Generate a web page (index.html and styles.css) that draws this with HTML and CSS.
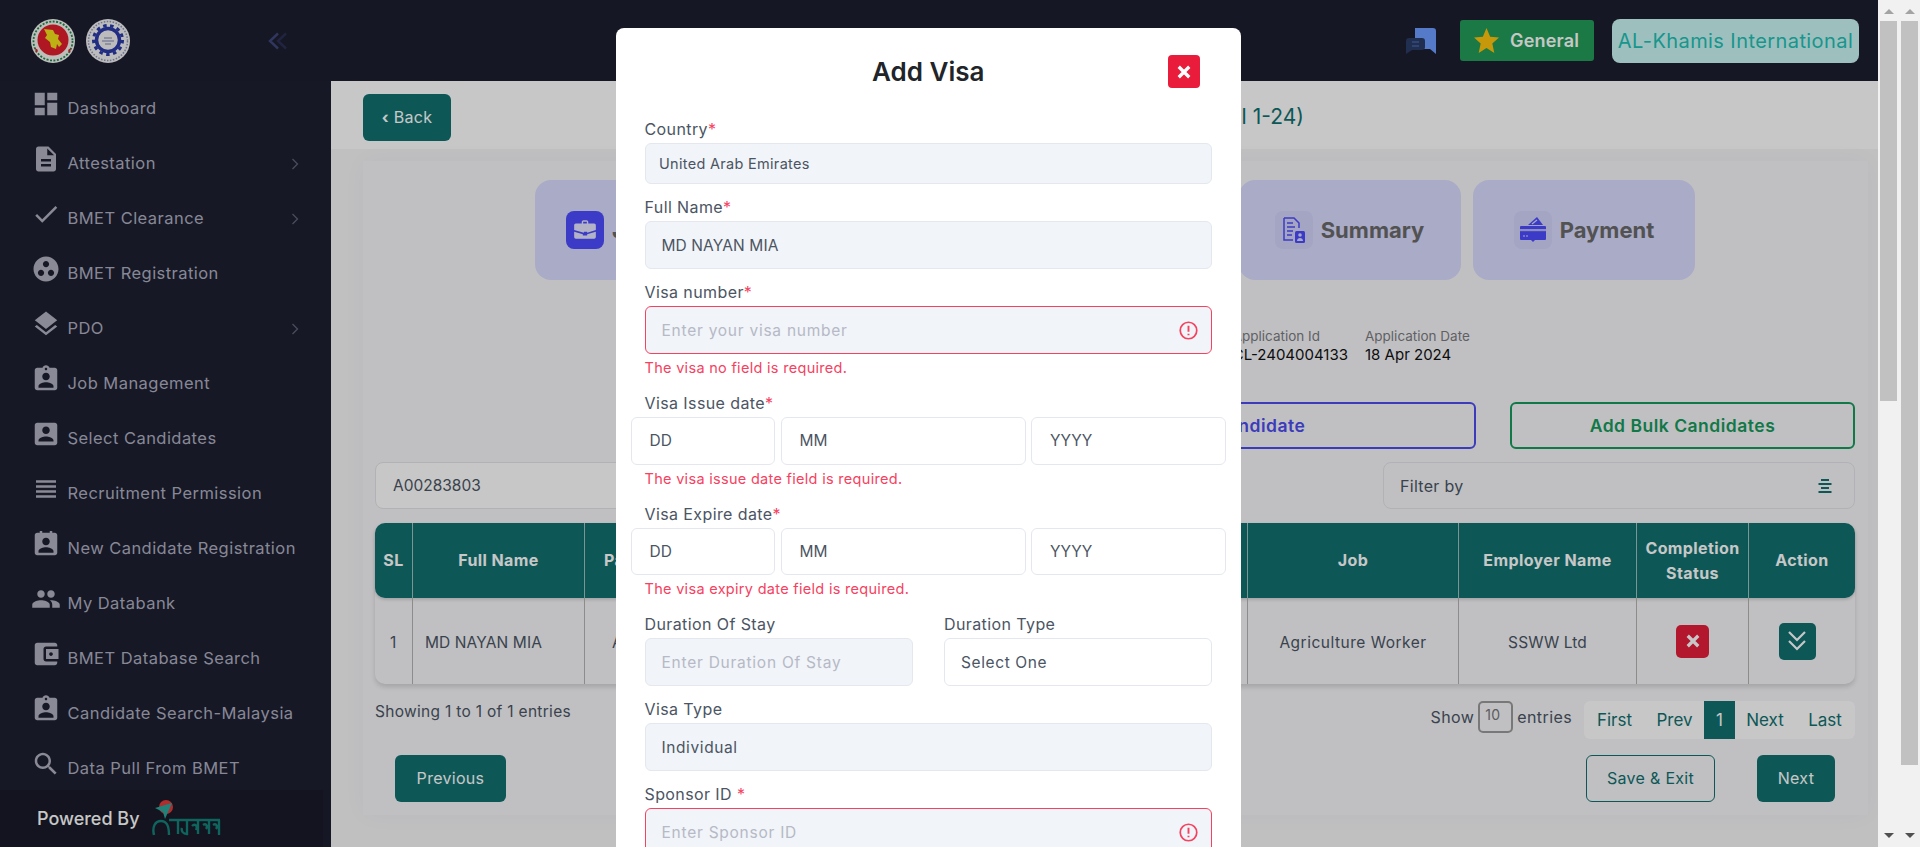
FILE: index.html
```html
<!DOCTYPE html>
<html lang="en">
<head>
<meta charset="utf-8">
<title>Add Visa</title>
<link rel="stylesheet" href="styles.css">
</head>
<body>
<svg class="sprite" aria-hidden="true">
  <symbol id="i-dashboard" viewBox="0 0 24 24"><path d="M3 13h8V3H3v10zm0 8h8v-6H3v6zm10 0h8V11h-8v10zm0-18v6h8V3h-8z"/></symbol>
  <symbol id="i-doc" viewBox="0 0 24 24"><path d="M14 2H6c-1.1 0-1.99.9-1.99 2L4 20c0 1.1.89 2 1.99 2H18c1.1 0 2-.9 2-2V8l-6-6zm2 16H8v-2h8v2zm0-4H8v-2h8v2zm-3-5V3.5L18.5 9H13z"/></symbol>
  <symbol id="i-check" viewBox="0 0 24 24"><path d="M9 16.17L4.83 12l-1.42 1.41L9 19 21 7l-1.41-1.41z"/></symbol>
  <symbol id="i-group" viewBox="0 0 24 24"><path d="M12 2C6.48 2 2 6.48 2 12s4.48 10 10 10 10-4.48 10-10S17.52 2 12 2zM8 17.5c-1.38 0-2.5-1.12-2.5-2.5s1.12-2.5 2.5-2.5 2.5 1.12 2.5 2.5-1.12 2.5-2.5 2.5zM9.500 8c0-1.38 1.12-2.5 2.5-2.5s2.5 1.12 2.5 2.5-1.12 2.5-2.5 2.5S9.500 9.380 9.500 8zm6.500 9.500c-1.38 0-2.5-1.12-2.5-2.5s1.12-2.5 2.5-2.5 2.5 1.12 2.5 2.5-1.12 2.5-2.5 2.5z"/></symbol>
  <symbol id="i-layers" viewBox="0 0 24 24"><path d="M11.99 18.54l-7.37-5.73L3 14.07l9 7 9-7-1.63-1.27-7.38 5.74zM12 16l7.36-5.73L21 9l-9-7-9 7 1.63 1.27L12 16z"/></symbol>
  <symbol id="i-assign" viewBox="0 0 24 24"><path d="M19 3h-4.18C14.4 1.84 13.3 1 12 1c-1.3 0-2.4.84-2.82 2H5c-1.1 0-2 .9-2 2v14c0 1.1.9 2 2 2h14c1.1 0 2-.9 2-2V5c0-1.1-.9-2-2-2zm-7 0c.55 0 1 .45 1 1s-.45 1-1 1-1-.45-1-1 .45-1 1-1zm0 4c1.66 0 3 1.34 3 3s-1.34 3-3 3-3-1.34-3-3 1.34-3 3-3zm6 12H6v-1.400c0-2 4-3.100 6-3.100s6 1.100 6 3.100V19z"/></symbol>
  <symbol id="i-box" viewBox="0 0 24 24"><path d="M3 5v14c0 1.100.89 2 2 2h14c1.100 0 2-.9 2-2V5c0-1.100-.9-2-2-2H5c-1.110 0-2 .9-2 2zm12 4c0 1.660-1.340 3-3 3s-3-1.340-3-3 1.340-3 3-3 3 1.340 3 3zm-9 8c0-2 4-3.100 6-3.100s6 1.100 6 3.100v1H6v-1z"/></symbol>
  <symbol id="i-lines" viewBox="0 0 24 24"><path d="M4 15h16v-2H4v2zm0 4h16v-2H4v2zm0-8h16V9H4v2zm0-6v2h16V5H4z"/></symbol>
  <symbol id="i-event" viewBox="0 0 24 24"><path d="M5 3h2V1.500h2V3h6V1.500h2V3h2c1.100 0 2 .9 2 2v14c0 1.100-.9 2-2 2H5c-1.100 0-2-.9-2-2V5c0-1.100.9-2 2-2zm7 4c-1.660 0-3 1.340-3 3s1.340 3 3 3 3-1.340 3-3-1.340-3-3-3zm6 12v-1.400c0-2-4-3.100-6-3.100s-6 1.100-6 3.100V19h12z"/></symbol>
  <symbol id="i-people" viewBox="0 0 24 24"><path d="M16 11c1.660 0 2.990-1.340 2.990-3S17.660 5 16 5c-1.660 0-3 1.340-3 3s1.340 3 3 3zm-8 0c1.660 0 2.990-1.340 2.990-3S9.660 5 8 5C6.340 5 5 6.340 5 8s1.340 3 3 3zm0 2c-2.330 0-7 1.170-7 3.500V19h14v-2.500c0-2.330-4.670-3.500-7-3.500zm8 0c-.29 0-.62.02-.97.05 1.160.84 1.970 1.970 1.970 3.450V19h6v-2.500c0-2.330-4.670-3.500-7-3.500z"/></symbol>
  <symbol id="i-wallet" viewBox="0 0 24 24"><path d="M21 18v1c0 1.100-.9 2-2 2H5c-1.110 0-2-.9-2-2V5c0-1.100.89-2 2-2h14c1.100 0 2 .9 2 2v1h-9c-1.110 0-2 .9-2 2v8c0 1.100.89 2 2 2h9zm-9-2h10V8H12v8zm4-2.500c-.83 0-1.500-.67-1.500-1.500s.67-1.500 1.500-1.500 1.500.67 1.500 1.500-.67 1.500-1.500 1.500z"/></symbol>
  <symbol id="i-search" viewBox="0 0 24 24"><path d="M15.500 14h-.79l-.28-.27C15.410 12.590 16 11.110 16 9.500 16 5.910 13.090 3 9.500 3S3 5.910 3 9.500 5.910 16 9.500 16c1.610 0 3.090-.59 4.230-1.570l.27.28v.79l5 4.990L20.490 19l-4.990-5zm-6 0C7.010 14 5 11.990 5 9.500S7.010 5 9.500 5 14 7.010 14 9.500 11.990 14 9.500 14z"/></symbol>
  <symbol id="i-chev" viewBox="0 0 8 12"><path d="M1.500 1l5 5-5 5" fill="none" stroke="currentColor" stroke-width="1.300"/></symbol>
  <symbol id="i-alert" viewBox="0 0 20 20"><circle cx="10" cy="10" r="8.700" fill="none" stroke="currentColor" stroke-width="1.800"/><path d="M10 5v6.200M10 13.300v1.800" fill="none" stroke="currentColor" stroke-width="2"/></symbol>
  <symbol id="i-x" viewBox="0 0 12 12"><path d="M1.500 1.500l9 9M10.500 1.500l-9 9" fill="none" stroke="currentColor" stroke-width="2.800"/></symbol>
</svg>

<div class="window">
  <div class="app">
    <aside class="sidebar">
      <div class="brand">
        <svg class="seal" viewBox="0 0 44 44">
          <circle cx="22" cy="22" r="22" fill="#f4f4ef"/>
          <circle cx="22" cy="22" r="19.500" fill="none" stroke="#1c8a52" stroke-width="1.800" stroke-dasharray="2 1.500"/>
          <circle cx="22" cy="21" r="15.500" fill="#e01f2e"/>
          <path d="M13 10l9 1 2 4 4 1-1 4 4 5-3 3-2-3-1 5-5-2-1-5-5-4 2-3z" fill="#f2e21c"/>
          <path d="M4 29l3 2-2 3zM40 29l-3 2 2 3z" fill="#e01f2e"/>
        </svg>
        <svg class="seal" viewBox="0 0 44 44">
          <circle cx="22" cy="22" r="22" fill="#f1f1f1"/>
          <circle cx="22" cy="22" r="19.500" fill="none" stroke="#8d93bd" stroke-width="1.500" stroke-dasharray="1.500 1.500"/>
          <circle cx="22" cy="21" r="11.500" fill="none" stroke="#2b39a8" stroke-width="3.500"/>
          <circle cx="22" cy="21" r="14.500" fill="none" stroke="#2b39a8" stroke-width="3" stroke-dasharray="3.500 3.500"/>
          <path d="M16 22h12M18 19h8M19 25h6" stroke="#7d84b4" stroke-width="1.200"/>
        </svg>
        <svg class="collapse" viewBox="0 0 20 18">
          <path d="M11 1.500L3 9l8 7.500" fill="none" stroke="#3f4679" stroke-width="2.400"/>
          <path d="M19 1.500L11 9l8 7.500" fill="none" stroke="#2b2f52" stroke-width="2.400"/>
        </svg>
      </div>
      <nav class="nav">
        <a class="nav-item"><svg class="nav-icon"><use href="#i-dashboard"/></svg><span>Dashboard</span></a>
        <a class="nav-item"><svg class="nav-icon"><use href="#i-doc"/></svg><span>Attestation</span><svg class="nav-chev"><use href="#i-chev"/></svg></a>
        <a class="nav-item"><svg class="nav-icon"><use href="#i-check"/></svg><span>BMET Clearance</span><svg class="nav-chev"><use href="#i-chev"/></svg></a>
        <a class="nav-item"><svg class="nav-icon"><use href="#i-group"/></svg><span>BMET Registration</span></a>
        <a class="nav-item"><svg class="nav-icon"><use href="#i-layers"/></svg><span>PDO</span><svg class="nav-chev"><use href="#i-chev"/></svg></a>
        <a class="nav-item"><svg class="nav-icon"><use href="#i-assign"/></svg><span>Job Management</span></a>
        <a class="nav-item"><svg class="nav-icon"><use href="#i-box"/></svg><span>Select Candidates</span></a>
        <a class="nav-item"><svg class="nav-icon"><use href="#i-lines"/></svg><span>Recruitment Permission</span></a>
        <a class="nav-item"><svg class="nav-icon"><use href="#i-event"/></svg><span>New Candidate Registration</span></a>
        <a class="nav-item"><svg class="nav-icon"><use href="#i-people"/></svg><span>My Databank</span></a>
        <a class="nav-item"><svg class="nav-icon"><use href="#i-wallet"/></svg><span>BMET Database Search</span></a>
        <a class="nav-item"><svg class="nav-icon"><use href="#i-assign"/></svg><span>Candidate Search-Malaysia</span></a>
        <a class="nav-item"><svg class="nav-icon"><use href="#i-search"/></svg><span>Data Pull From BMET</span></a>
      </nav>
      <div class="powered">
        <span>Powered By</span>
        <svg class="powered-logo" viewBox="0 0 70 40">
          <circle cx="14" cy="8" r="7" fill="#e23a3a"/>
          <path d="M3 9l17-5-7 16-2-7z" fill="#2aa79b"/>
          <path d="M2 36c-2-8 1-14 7-14 6 0 8 5 8 14M17 21h51M26 21v14M35 21v14c-4 0-6-3-5-6M46 21v14M57 21v14M67 21v15M40 27c3-3 6 0 4 4M51 26c3-2 5 1 3 4M61 26c3-2 5 1 3 4" fill="none" stroke="#148078" stroke-width="2.400"/>
        </svg>
      </div>
    </aside>

    <div class="main">
      <header class="topbar">
        <svg class="chat" viewBox="0 0 30 26">
          <path d="M9 0h18a3 3 0 0 1 3 3v23l-6-5H9z" fill="#6e9dff"/>
          <path d="M3 10h13a3 3 0 0 1 3 3v6a3 3 0 0 1-3 3H6l-6 4V13a3 3 0 0 1 3-3z" fill="#2a3b66"/>
          <path d="M6 14h7M6 18h7" stroke="#6e9dff" stroke-width="1.200" opacity=".6"/>
        </svg>
        <div class="badge-general">
          <svg class="star" viewBox="0 0 24 24"><path d="M12 0l3.500 8.300 8.500.8-6.400 5.800 1.900 9.100L12 19.200 4.500 24l1.900-9.100L0 9.100l8.500-.8z"/></svg>
          <span>General</span>
        </div>
        <div class="badge-agency">AL-Khamis International</div>
      </header>

      <div class="titlebar">
        <button class="btn btn-teal btn-back"><b>&lsaquo;</b> Back</button>
        <h1 class="page-title">(Batch I 1-24)</h1>
      </div>

      <div class="content">
        <section class="card">
          <div class="steps">
            <div class="step">
              <span class="step-icon step-icon-on">
                <svg viewBox="0 0 24 24"><path d="M9 6V4.500C9 3.700 9.700 3 10.500 3h3c.8 0 1.500.7 1.500 1.500V6h5.500c.8 0 1.500.7 1.500 1.500V12l-8 2.500v-1h-3v1L2 12V7.500C2 6.700 2.700 6 3.500 6H9zm1.300 0h3.400V4.300h-3.400V6zM2 13.500l8 2.500v1h4v-1l8-2.500v5c0 .8-.7 1.500-1.500 1.500h-17C2.700 20 2 19.300 2 18.500v-5z" fill="#e6e6ff"/></svg>
              </span>
              <span class="step-name step-name-tight">Job Details</span>
            </div>
            <div class="step"></div>
            <div class="step"></div>
            <div class="step">
              <span class="step-icon">
                <svg viewBox="0 0 24 28"><path d="M2 2h10l5 5v5M2 2v22h9M5 7h6M5 11h8M5 15h6M5 19h5" fill="none" stroke="#4c4cff" stroke-width="1.500"/><rect x="13" y="15" width="10" height="12" rx="1.500" fill="#4c4cff"/><circle cx="18" cy="19" r="1.800" fill="#dadbff"/><path d="M15 25c0-4 6-4 6 0z" fill="#dadbff"/></svg>
              </span>
              <span class="step-name">Summary</span>
            </div>
            <div class="step">
              <span class="step-icon">
                <svg viewBox="0 0 26 26"><path d="M8 8l9-8 6 8z" fill="#4c4cff"/><path d="M12 7l5-4" stroke="#dadbff" stroke-width="1.200"/><rect y="9" width="26" height="14" rx="1" fill="#4c4cff"/><rect y="12" width="26" height="2.200" fill="#b6b7f5"/><path d="M11 23h4l-2 2z" fill="#4c4cff"/><path d="M3 19h2M6 19h2" stroke="#dadbff" stroke-width="1"/></svg>
              </span>
              <span class="step-name">Payment</span>
            </div>
          </div>

          <div class="info">
            <div class="info-col"><span class="info-label">Application Id</span><span class="info-value">CL-2404004133</span></div>
            <div class="info-col info-date"><span class="info-label">Application Date</span><span class="info-value">18 Apr 2024</span></div>
          </div>

          <div class="add-row">
            <button class="btn-outline btn-blue">Add Candidate</button>
            <button class="btn-outline btn-green">Add Bulk Candidates</button>
          </div>

          <div class="filter-row">
            <div class="search-box">A00283803</div>
            <div class="filter-box">
              <span>Filter by</span>
              <svg class="filter-icon" viewBox="0 0 16 16"><path d="M4 2h8M1.500 6h13M4 10h8M1.500 14h13" stroke="#117170" stroke-width="1.800"/></svg>
            </div>
          </div>

          <table class="grid">
            <colgroup>
              <col class="c-sl"><col class="c-name"><col class="c-pass"><col class="c-hidden"><col class="c-job"><col class="c-emp"><col class="c-status"><col class="c-action">
            </colgroup>
            <thead>
              <tr>
                <th>SL</th>
                <th>Full Name</th>
                <th class="th-pass">Passport</th>
                <th></th>
                <th>Job</th>
                <th>Employer Name</th>
                <th>Completion Status</th>
                <th>Action</th>
              </tr>
            </thead>
            <tbody>
              <tr>
                <td>1</td>
                <td class="td-name">MD NAYAN MIA</td>
                <td class="td-pass">A00283803</td>
                <td></td>
                <td>Agriculture Worker</td>
                <td class="td-caps">SSWW Ltd</td>
                <td><button class="icon-btn icon-btn-red"><svg class="ic-x"><use href="#i-x"/></svg></button></td>
                <td><button class="icon-btn icon-btn-teal"><svg class="ic-dbl" viewBox="0 0 20 22"><path d="M2 2l8 8 8-8M2 11l8 8 8-8" fill="none" stroke="#fff" stroke-width="2.200"/></svg></button></td>
              </tr>
            </tbody>
          </table>

          <div class="pager-row">
            <div class="showing">Showing 1 to 1 of 1 entries</div>
            <div class="pager-right">
              <div class="length"><span>Show</span><span class="length-box">10</span><span>entries</span></div>
              <div class="pager">
                <a class="pg pg-first">First</a><a class="pg pg-prev">Prev</a><a class="pg pg-on">1</a><a class="pg pg-next">Next</a><a class="pg pg-last">Last</a>
              </div>
            </div>
          </div>

          <div class="wizard-row">
            <button class="btn btn-teal btn-prev">Previous</button>
            <div class="wizard-right">
              <button class="btn btn-ghost">Save &amp; Exit</button>
              <button class="btn btn-teal btn-next">Next</button>
            </div>
          </div>
        </section>
      </div>
    </div>

    <div class="overlay"></div>

    <div class="modal">
      <div class="modal-head">
        <h2 class="modal-title">Add Visa</h2>
        <button class="modal-close"><svg class="ic-x"><use href="#i-x"/></svg></button>
      </div>
      <form class="form">
        <div class="field">
          <div class="label">Country<i>*</i></div>
          <div class="input input-off input-short">United Arab Emirates</div>
        </div>
        <div class="field">
          <div class="label">Full Name<i>*</i></div>
          <div class="input input-off caps">MD NAYAN MIA</div>
        </div>
        <div class="field">
          <div class="label">Visa number<i>*</i></div>
          <div class="input input-off input-bad ph">Enter your visa number<svg class="alert"><use href="#i-alert"/></svg></div>
          <div class="error">The visa no field is required.</div>
        </div>
        <div class="field">
          <div class="label">Visa Issue date<i>*</i></div>
          <div class="dates">
            <div class="input input-date caps">DD</div>
            <div class="input input-date caps">MM</div>
            <div class="input input-date caps">YYYY</div>
          </div>
          <div class="error">The visa issue date field is required.</div>
        </div>
        <div class="field">
          <div class="label">Visa Expire date<i>*</i></div>
          <div class="dates">
            <div class="input input-date caps">DD</div>
            <div class="input input-date caps">MM</div>
            <div class="input input-date caps">YYYY</div>
          </div>
          <div class="error">The visa expiry date field is required.</div>
        </div>
        <div class="two">
          <div class="field">
            <div class="label">Duration Of Stay</div>
            <div class="input input-off ph">Enter Duration Of Stay</div>
          </div>
          <div class="field">
            <div class="label">Duration Type</div>
            <div class="input">Select One</div>
          </div>
        </div>
        <div class="field">
          <div class="label">Visa Type</div>
          <div class="input input-off">Individual</div>
        </div>
        <div class="field">
          <div class="label">Sponsor ID <i>*</i></div>
          <div class="input input-off input-bad ph">Enter Sponsor ID<svg class="alert"><use href="#i-alert"/></svg></div>
        </div>
      </form>
    </div>
  </div>

  <div class="scrollbar">
    <span class="arrow-up"></span>
    <span class="thumb thumb-inner"></span>
    <span class="arrow-down"></span>
  </div>
  <div class="scrollbar">
    <span class="arrow-up"></span>
    <span class="thumb thumb-outer"></span>
    <span class="arrow-down"></span>
  </div>
</div>
</body>
</html>
```

FILE: styles.css
```css
* { box-sizing: border-box; }
html, body { margin: 0; height: 847px; overflow: hidden; }
body { font-family: Inter, "Liberation Sans", sans-serif; color: #4b5563; background: #fff; }
.sprite { display: none; }
h1, h2 { margin: 0; font-weight: 600; }
button { font-family: inherit; cursor: pointer; }

.window { display: flex; height: 847px; }
.app { position: relative; flex: 1; min-width: 0; display: flex; overflow: hidden; }

/* scrollbars */
.scrollbar { width: 21px; flex: none; display: flex; flex-direction: column; align-items: center; background: #f1f1f1; }
.thumb { width: 17px; background: #c1c1c1; flex: none; }
.thumb-inner { height: 380px; }
.thumb-outer { height: 744px; }
.arrow-up, .arrow-down { width: 0; height: 0; border-left: 5px solid transparent; border-right: 5px solid transparent; flex: none; }
.arrow-up { border-bottom: 5px solid #a3a3a3; margin: 9px 0 7px; }
.arrow-down { border-top: 5px solid #505050; margin: auto 0 9px; }

/* sidebar */
.sidebar { width: 331px; flex: none; height: 847px; background: #1d1e2f; display: flex; flex-direction: column; }
.brand { height: 81px; flex: none; display: flex; align-items: center; padding-left: 31px; gap: 11px; background: #1d1e2f; }
.seal { width: 44px; height: 44px; flex: none; }
.collapse { width: 20px; height: 18px; margin-left: 126px; }
.nav { flex: 1; min-height: 0; overflow: hidden; background: #1e1f31; }
.nav-item { height: 55px; display: flex; align-items: center; padding: 0 0 2px 31px; color: #aeafc0; font-size: 16.500px; letter-spacing: .45px; position: relative; white-space: nowrap; }
.nav-icon { width: 30px; height: 30px; fill: #b0b1c0; margin: 0 6.500px 8px 0; flex: none; }
.nav-chev { position: absolute; left: 291px; top: 22px; width: 8px; height: 12px; color: #5f6178; }
.powered { height: 57px; flex: none; width: 323px; background: #191a28; display: flex; align-items: center; padding-left: 37px; gap: 12px; color: #fff; font-size: 18px; font-weight: 500; }
.powered-logo { width: 70px; height: 40px; flex: none; }

/* main */
.main { flex: 1; min-width: 0; display: flex; flex-direction: column; height: 847px; }
.topbar { height: 81px; flex: none; background: #1d1e2f; display: flex; align-items: center; justify-content: flex-end; padding-right: 19px; }
.chat { width: 30px; height: 26px; margin-right: 24px; }
.badge-general { width: 134px; height: 41px; margin-right: 18px; border-radius: 3px; background: #229c58; color: #fff; font-weight: 600; font-size: 18px; letter-spacing: .2px; display: flex; align-items: center; padding-left: 14px; gap: 11px; }
.star { width: 25px; height: 25px; fill: #ffc30e; flex: none; }
.badge-agency { width: 247px; height: 44px; border-radius: 8px; background: #caf7f5; color: #20c0b4; font-size: 20px; letter-spacing: .42px; display: flex; align-items: center; justify-content: center; white-space: nowrap; }

.titlebar { height: 68px; flex: none; background: #fff; display: flex; align-items: center; padding: 5px 0 0 32px; }
.page-title { margin: 0 574px 2px auto; color: #117170; font-size: 21px; font-weight: 400; }

.btn { border: 0; border-radius: 6px; font-size: 16px; letter-spacing: .3px; height: 47px; padding: 0 0 2px; }
.btn-teal { background: #117170; color: #fff; }
.btn-back { width: 88px; }
.btn-prev { width: 111px; }
.btn-next { width: 78px; }
.btn-ghost { width: 129px; background: transparent; border: 1px solid #117170; color: #117170; }

.content { flex: 1; background: #f6f6f8; padding: 12px 10px 0 32px; }
.card { background: #f6f6fa; box-shadow: 0 0 24px rgba(0, 0, 0, .03); padding: 19px 13px 13px 12px; }

.steps { display: flex; justify-content: center; gap: 12.500px; }
.step { width: 222px; height: 100px; border-radius: 16px; background: #dadbff; display: flex; align-items: center; justify-content: center; gap: 8px; }
.step-icon { width: 38px; height: 38px; border-radius: 8px; background: #d2d3fa; display: flex; align-items: center; justify-content: center; flex: none; }
.step-icon svg { width: 26px; height: 28px; }
.step-icon-on { background: #4c4cff; }
.step-name { font-size: 22px; font-weight: 700; color: #6a6a6a; white-space: nowrap; }
.step-name-tight { letter-spacing: -.5px; }

.info { display: flex; justify-content: flex-end; gap: 17px; margin-top: 46px; padding-right: 386px; }
.info-col { display: flex; flex-direction: column; white-space: nowrap; align-items: flex-start; }
.info-date { width: 104px; }
.info-label { font-size: 13.500px; line-height: 20px; color: #7c7c80; }
.info-value { font-size: 15px; line-height: 20px; color: #111; margin-top: -1px; }

.add-row { display: flex; justify-content: flex-end; gap: 34px; margin-top: 37px; }
.btn-outline { height: 47px; border-radius: 6px; background: transparent; font-size: 17.500px; letter-spacing: .5px; font-weight: 600; border: 2px solid; }
.btn-blue { width: 473px; color: #4c4cf0; border-color: #4c4cf0; }
.btn-green { width: 345px; color: #169a5c; border-color: #169a5c; }

.filter-row { display: flex; justify-content: space-between; margin-top: 13px; }
.search-box, .filter-box { height: 47px; border: 1px solid #e4e5ea; border-radius: 8px; font-size: 15.500px; display: flex; align-items: center; }
.search-box { width: 600px; background: #fff; padding-left: 17px; color: #4b5563; }
.filter-box { width: 472px; padding: 0 21px 0 16px; justify-content: space-between; background: transparent; font-size: 16px; letter-spacing: .3px; }
.filter-icon { width: 16px; height: 16px; }

.grid { width: 100%; table-layout: fixed; border-collapse: separate; border-spacing: 0; margin-top: 14px; border-radius: 10px; box-shadow: 0 3px 5px rgba(0, 0, 0, .14); font-size: 15.500px; letter-spacing: .5px; text-align: center; }
.c-sl { width: 38px; } .c-name { width: 172px; } .c-pass { width: 176px; } .c-hidden { width: 487px; }
.c-job { width: 211px; } .c-emp { width: 178px; } .c-status { width: 112px; } .c-action { width: 106px; }
.grid th { height: 75px; background: #117170; color: #fff; font-weight: 700; font-size: 16px; letter-spacing: .4px; line-height: 25px; border-right: 1px solid #a8c9c8; padding: 0 2px; box-shadow: 0 2px 3px rgba(0, 0, 0, .14); }
.grid th:first-child { border-radius: 10px 0 0 10px; }
.grid th:last-child { border-radius: 0 10px 10px 0; border-right: 0; }
.grid .th-pass { text-align: left; padding-left: 19px; }
.grid td { height: 86px; border-right: 1px solid #b4b4b4; color: #4b5563; padding: 2px 0 0; }
.grid td:last-child { border-right: 0; }
.grid .td-name { text-align: left; padding-left: 12px; letter-spacing: .1px; }
.grid .td-pass { text-align: left; padding-left: 27px; letter-spacing: .1px; }
.grid .td-caps { letter-spacing: .1px; }
.icon-btn { border: 0; padding: 0; display: inline-flex; align-items: center; justify-content: center; border-radius: 5px; vertical-align: middle; }
.icon-btn-red { width: 33px; height: 33px; background: #e61e3c; color: #fff; margin-top: -2px; }
.icon-btn-teal { width: 37px; height: 37px; background: #117170; margin: -2px 0 0 -10px; }
.ic-x { width: 14px; height: 14px; }
.ic-dbl { width: 20px; height: 22px; }

.pager-row { display: flex; justify-content: space-between; margin-top: 17px; height: 38px; }
.showing { font-size: 15.500px; letter-spacing: .3px; line-height: 22px; }
.pager-right { display: flex; gap: 12px; }
.length { display: flex; align-items: flex-start; gap: 4px; font-size: 16px; letter-spacing: .4px; line-height: 32px; }
.length-box { width: 35px; height: 32px; border: 2px solid #9a9a9a; border-radius: 5px; line-height: 24px; font-size: 14px; padding-left: 5px; color: #777; }
.pager { width: 271px; height: 38px; background: #fff; border-radius: 6px; display: flex; font-size: 17px; color: #117170; }
.pg { display: flex; align-items: center; justify-content: center; }
.pg-first { width: 61px; } .pg-prev { width: 59px; } .pg-on { width: 31px; background: #117170; color: #fff; } .pg-next { width: 60px; } .pg-last { width: 60px; }

.wizard-row { display: flex; justify-content: space-between; margin-top: 16px; padding: 0 20px; }
.wizard-right { display: flex; gap: 42px; }

/* modal layer */
.overlay { position: absolute; inset: 0; background: rgba(0, 0, 0, .22); }
.modal { position: absolute; left: 616px; top: 28px; width: 625px; height: 900px; background: #fff; border-radius: 8px; padding: 27px 29px 0 28.500px; }
.modal-head { position: relative; height: 33px; display: flex; justify-content: center; align-items: center; }
.modal-title { font-size: 26px; color: #212529; }
.modal-close { position: absolute; right: 12.500px; top: 0; width: 32px; height: 33px; border: 0; padding: 0; border-radius: 4px; background: #ea1c3c; color: #fff; display: flex; align-items: center; justify-content: center; }

.form { display: flex; flex-direction: column; gap: 13px; margin-top: 31px; }
.two { display: grid; grid-template-columns: 268px 268px; justify-content: space-between; }
.label { height: 22px; line-height: 21px; margin-bottom: 2px; font-size: 16px; letter-spacing: .4px; color: #4b5563; white-space: nowrap; }
.label i { font-style: normal; color: #f5425f; }
.input { position: relative; height: 48px; border: 1px solid #e4e8ee; border-radius: 6px; background: #fff; font-size: 15.500px; letter-spacing: .6px; padding-left: 16px; display: flex; align-items: center; color: #4b5563; white-space: nowrap; }
.caps { letter-spacing: .1px; }
.input-off { background: #f1f4f8; }
.input-short { height: 41px; font-size: 14.500px; letter-spacing: .3px; padding-left: 13.500px; }
.input-bad { border-color: #f5425f; }
.ph { color: #b6b9c6; letter-spacing: .75px; }
.alert { position: absolute; right: 13px; top: 14px; width: 19px; height: 19px; color: #f5425f; }
.error { margin-top: 4px; margin-bottom: 2px; line-height: 20px; font-size: 14.500px; letter-spacing: .3px; color: #f5425f; }
.dates { display: grid; grid-template-columns: 144.500px 245px 195px; gap: 5.500px; margin: 0 -14px; }
.input-date { height: 47.500px; padding-left: 18px; }
```
